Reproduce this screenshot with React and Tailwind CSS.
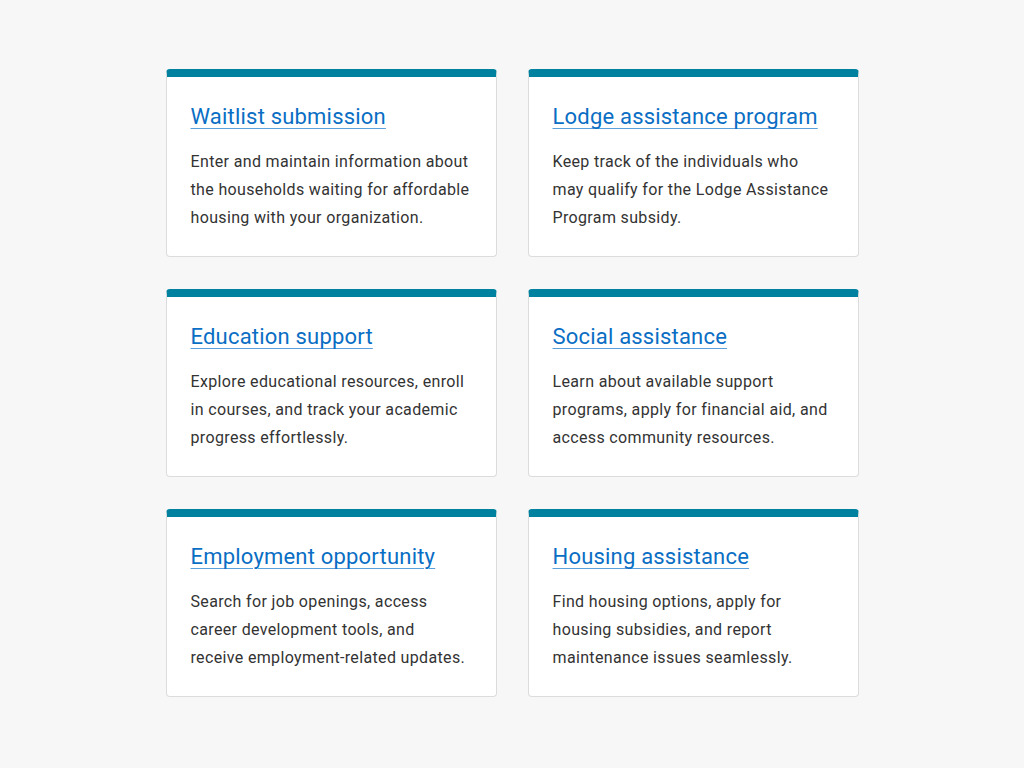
import React from "react";

const cards = [
    {
        title: "Waitlist submission",
        text: "Enter and maintain information about the households waiting for affordable housing with your organization.",
    },
    {
        title: "Lodge assistance program",
        text: "Keep track of the individuals who may qualify for the Lodge Assistance Program subsidy.",
    },
    {
        title: "Education support",
        text: "Explore educational resources, enroll in courses, and track your academic progress effortlessly.",
    },
    {
        title: "Social assistance",
        text: "Learn about available support programs, apply for financial aid, and access community resources.",
    },
    {
        title: "Employment opportunity",
        text: "Search for job openings, access career development tools, and receive employment-related updates.",
    },
    {
        title: "Housing assistance",
        text: "Find housing options, apply for housing subsidies, and report maintenance issues seamlessly.",
    },
];

export default function App() {
    return (
        <div className="min-h-screen bg-[#f7f7f7] pt-[69px] font-['Roboto',sans-serif]">
            <div className="mx-auto grid w-[693px] grid-cols-2 gap-x-[31px] gap-y-8">
                {cards.map((c, idx) => (
                    <div
                        key={idx}
                        className="h-[188px] rounded-[4px] border border-[#dcdcdc] border-t-8 border-t-[#00819f] bg-white px-6 pt-[25px]"
                    >
                        <a
                            href="#"
                            className="block text-[22px] leading-[30px] tracking-[0.2px] text-[#0a6ec4] underline decoration-[#5aa0dd] decoration-1 underline-offset-[4px]"
                        >
                            {c.title}
                        </a>
                        <p className="mt-4 text-[16px] leading-[28px] tracking-[0.35px] text-[#333333]">
                            {c.text}
                        </p>
                    </div>
                ))}
            </div>
        </div>
    );
}
